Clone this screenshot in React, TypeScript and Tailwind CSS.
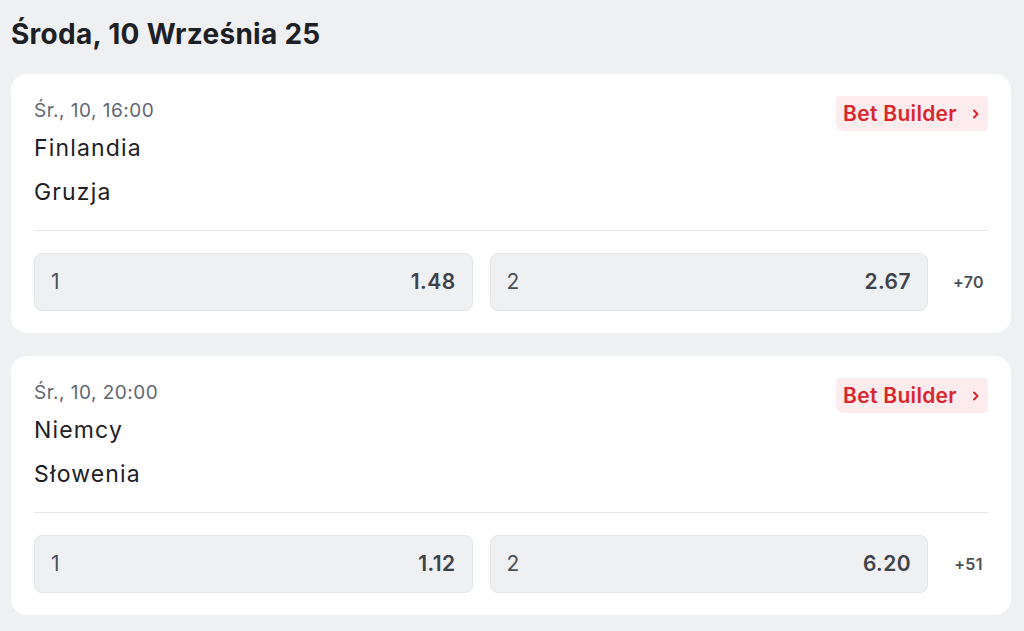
const matches = [
  { time: "Śr., 10, 16:00", home: "Finlandia", away: "Gruzja", o1: "1.48", o2: "2.67", more: "+70" },
  { time: "Śr., 10, 20:00", home: "Niemcy", away: "Słowenia", o1: "1.12", o2: "6.20", more: "+51" },
]

const Chevron = () => (
  <svg width="8" height="12" viewBox="0 0 8 12" fill="none">
    <path d="M2 2.5L5.5 6L2 9.5" stroke="currentColor" strokeWidth="2" strokeLinecap="round" strokeLinejoin="round" />
  </svg>
)

const OddButton = ({ label, value }: { label: string; value: string }) => (
  <div className="flex-1 h-[58px] flex items-center justify-between px-[16px] bg-[#eff0f2] border border-[#e4e5e7] rounded-[8px]">
    <span className="text-[21px] tracking-[0.02em] text-[#4a5058]">{label}</span>
    <span className="text-[21px] tracking-[0.02em] font-semibold text-[#3d434b]">{value}</span>
  </div>
)

const MatchCard = ({ m }: { m: (typeof matches)[number] }) => (
  <div className="bg-white rounded-[16px] px-[23px] pt-[24px] pb-[22px]">
    <div className="flex items-start justify-between">
      <div className="flex flex-col">
        <span className="text-[19px] leading-[26px] tracking-[0.025em] text-[#5f6772]">{m.time}</span>
        <span className="text-[23px] leading-[44px] mt-[2px] tracking-[0.05em] text-[#1d2025]">{m.home}</span>
        <span className="text-[23px] leading-[44px] tracking-[0.05em] text-[#1d2025]">{m.away}</span>
      </div>
      <div className="-mt-[2px] h-[35px] flex items-center gap-[15px] pl-[7px] pr-[8px] bg-[#fdeced] rounded-[4px] rounded-bl-[8px] text-[#d8272d]">
        <span className="text-[21px] tracking-[0.015em] font-semibold">Bet Builder</span>
        <Chevron />
      </div>
    </div>
    <div className="mt-[16px] border-t border-[#e6e7e9]" />
    <div className="mt-[22px] flex items-center gap-[17px]">
      <OddButton label="1" value={m.o1} />
      <OddButton label="2" value={m.o2} />
      <div className="w-[43px] pl-[4px] text-center text-[16px] tracking-[0.02em] font-semibold text-[#4a5058]">{m.more}</div>
    </div>
  </div>
)

export default function App() {
  return (
    <div className="min-h-screen bg-[#eff0f2] pl-[11px] pr-[13px] pt-[18px] pb-[16px]" style={{ fontFamily: "Inter, 'Noto Sans', sans-serif" }}>
      <h1 className="text-[28px] leading-[32px] tracking-[0.01em] font-bold text-[#1d2025] mb-[24px]">Środa, 10 Września 25</h1>
      <div className="flex flex-col gap-[23px]">
        {matches.map((m) => (
          <MatchCard key={m.time} m={m} />
        ))}
      </div>
    </div>
  )
}
